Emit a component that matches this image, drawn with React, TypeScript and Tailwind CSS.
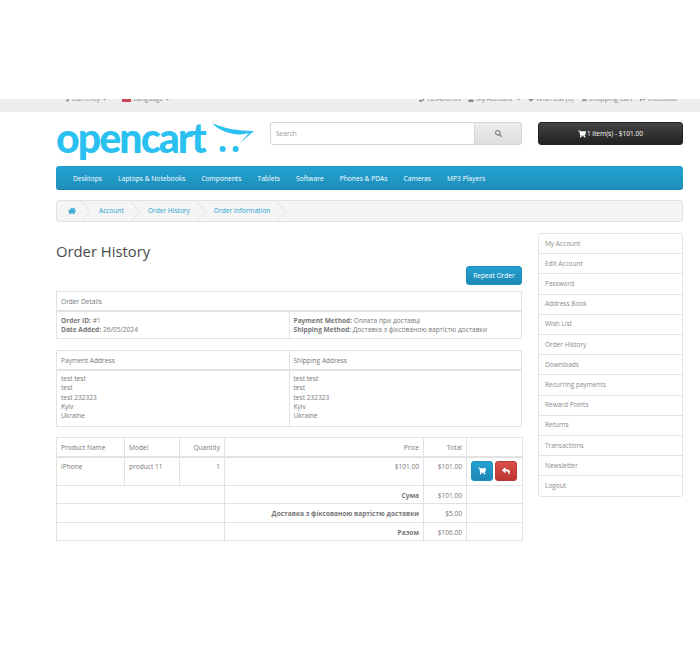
import { FaHome, FaSearch, FaShoppingCart, FaReply, FaPhone, FaUser, FaHeart, FaShare, FaDollarSign, FaCaretDown } from 'react-icons/fa'

const navItems = ['Desktops', 'Laptops & Notebooks', 'Components', 'Tablets', 'Software', 'Phones & PDAs', 'Cameras', 'MP3 Players']
const crumbs = ['Account', 'Order History', 'Order Information']
const sideItems = [
  'My Account', 'Edit Account', 'Password', 'Address Book', 'Wish List', 'Order History', 'Downloads',
  'Recurring payments', 'Reward Points', 'Returns', 'Transactions', 'Newsletter', 'Logout',
]
const address = ['test test', 'test', 'test 232323', 'Kyiv', 'Ukraine']

const cell = 'border border-[#e2e2e2] px-[4px] pt-[4px] align-top'
const head = 'border border-b-2 border-[#e2e2e2] px-[4px] pt-[2px]'

function Chevron() {
  return (
    <svg className="absolute right-0 top-0 h-[21px] w-[10px]" viewBox="0 0 10 21" fill="none">
      <path d="M0 0 L9.5 10.5 L0 21" stroke="#e2e2e2" strokeWidth="1" />
    </svg>
  )
}

function TopBar() {
  return (
    <div className="h-[13px] overflow-hidden bg-[#eee] text-[#888]">
      <div className="ml-[56px] mr-[17px] -mt-[6px] flex h-[13px] items-center justify-between pl-[9px] pr-[6px] text-[6.7px]">
        <div className="flex items-center gap-[15px]">
          <span className="flex items-center gap-[2px]"><FaDollarSign className="h-[6px] w-[5px]" /> Currency <FaCaretDown className="h-[6px] w-[5px]" /></span>
          <span className="flex items-center gap-[2px]">
            <span className="h-[5px] w-[9px] bg-[#c8485a]" /> Language <FaCaretDown className="h-[6px] w-[5px]" />
          </span>
        </div>
        <div className="flex items-center gap-[7px]">
          <span className="flex items-center gap-[2px]"><FaPhone className="h-[6px] w-[6px]" /> 123456789</span>
          <span className="flex items-center gap-[2px]"><FaUser className="h-[6px] w-[6px]" /> My Account <FaCaretDown className="ml-[2px] h-[6px] w-[5px]" /></span>
          <span className="flex items-center gap-[2px]"><FaHeart className="h-[6px] w-[6px]" /> Wish List (0)</span>
          <span className="flex items-center gap-[2px]"><FaShoppingCart className="h-[6px] w-[6px]" /> Shopping Cart</span>
          <span className="flex items-center gap-[2px]"><FaShare className="h-[6px] w-[6px]" /> Checkout</span>
        </div>
      </div>
    </div>
  )
}

function Logo() {
  return (
    <div className="relative h-[40px] w-[214px]">
      <span className="block font-['Lato',sans-serif] text-[41px] leading-[31px] font-black tracking-[-1.9px] text-[#2ac1f1]">opencart</span>
      <svg className="absolute left-[154px] top-0 h-[32px] w-[46px]" viewBox="0 0 46 32" fill="#2ac1f1">
        <path d="M2 1 C12 6 28 9 44 9 L30 21 L39 11 C26 15 10 10 2 1 Z" />
        <circle cx="12.7" cy="27" r="3" />
        <circle cx="25.7" cy="27" r="3" />
      </svg>
    </div>
  )
}

export default function App() {
  return (
    <div className="min-h-[650px] bg-white pt-[99px] font-['Open_Sans',sans-serif] text-[6.6px] text-[#777]">
      <TopBar />

      <div className="mx-[56px] w-[627px]">
        <div className="mt-[10px] flex items-start">
          <Logo />
          <div className="flex h-[23px] w-[252px]">
            <div className="flex flex-1 items-center rounded-l-[3px] border border-[#d5d5d5] bg-white px-[5px] pt-[1px] text-[#999]">Search</div>
            <div className="flex w-[47px] items-center justify-center rounded-r-[3px] border border-l-0 border-[#d5d5d5] bg-gradient-to-b from-[#eee] to-[#ddd]">
              <FaSearch className="h-[7px] w-[7px] text-[#777]" />
            </div>
          </div>
          <div className="ml-[16px] flex h-[23px] w-[145px] items-center justify-center gap-[1px] rounded-[3px] border border-[#222] bg-gradient-to-b from-[#444] to-[#222] pt-[1px] text-white">
            <FaShoppingCart className="h-[8px] w-[8px]" /> 1 item(s) - $101.00
          </div>
        </div>

        <nav className="mt-[4px] flex h-[24px] items-center gap-[16px] rounded-[3px] border-b border-[#1f7fad] bg-gradient-to-b from-[#23a1d1] to-[#1f90bb] pl-[17px] pt-[3px] text-[6.7px] text-white">
          {navItems.map((item) => (
            <span key={item}>{item}</span>
          ))}
        </nav>

        <ul className="mt-[10px] flex h-[22px] items-center rounded-[3px] border border-[#e2e2e2] bg-[#f5f5f5] text-[#23a1d1]">
          <li className="relative flex h-[21px] items-center pl-[11px] pr-[15px]">
            <FaHome className="h-[8px] w-[8px]" />
            <Chevron />
          </li>
          {crumbs.map((c) => (
            <li key={c} className="relative flex h-[21px] items-center pl-[8px] pr-[16px]">
              {c}
              <Chevron />
            </li>
          ))}
        </ul>

        <div className="mt-[11px] flex gap-[16px]">
          <div className="w-[466px]">
            <h1 className="mt-[10px] text-[14.8px] leading-[16px] text-[#4a4a4a]">Order History</h1>
            <div className="mt-[7px] flex justify-end">
              <button className="h-[19px] w-[56px] rounded-[3px] border border-[#1f90bb] bg-gradient-to-b from-[#23a1d1] to-[#1f88b5] text-white">
                Repeat Order
              </button>
            </div>

            <table className="mt-[6px] w-full table-fixed border-collapse">
              <thead>
                <tr className="h-[19px]">
                  <td colSpan={2} className={head}>Order Details</td>
                </tr>
              </thead>
              <tbody>
                <tr className="h-[28px] leading-[9px]">
                  <td className="border border-[#e2e2e2] px-[4px]">
                    <b>Order ID:</b> #1<br />
                    <b>Date Added:</b> 26/05/2024
                  </td>
                  <td className="border border-[#e2e2e2] px-[4px]">
                    <b>Payment Method:</b> Оплата при доставці<br />
                    <b>Shipping Method:</b> Доставка з фіксованою вартістю доставки
                  </td>
                </tr>
              </tbody>
            </table>

            <table className="mt-[11px] w-full table-fixed border-collapse">
              <thead>
                <tr className="h-[19px]">
                  <td className={head}>Payment Address</td>
                  <td className={head}>Shipping Address</td>
                </tr>
              </thead>
              <tbody>
                <tr className="h-[57px] leading-[9.4px]">
                  {[0, 1].map((i) => (
                    <td key={i} className="border border-[#e2e2e2] px-[4px] pb-[2px]">
                      {address.map((line) => (
                        <div key={line}>{line}</div>
                      ))}
                    </td>
                  ))}
                </tr>
              </tbody>
            </table>

            <table className="mt-[10px] w-full table-fixed border-collapse">
              <colgroup>
                <col className="w-[68px]" />
                <col className="w-[55px]" />
                <col className="w-[45px]" />
                <col className="w-[199px]" />
                <col className="w-[43px]" />
                <col className="w-[56px]" />
              </colgroup>
              <thead>
                <tr className="h-[19px]">
                  <td className={head}>Product Name</td>
                  <td className={head}>Model</td>
                  <td className={`${head} text-right`}>Quantity</td>
                  <td className={`${head} text-right`}>Price</td>
                  <td className={`${head} text-right`}>Total</td>
                  <td className={head} />
                </tr>
              </thead>
              <tbody>
                <tr className="h-[29px]">
                  <td className={cell}>iPhone</td>
                  <td className={cell}>product 11</td>
                  <td className={`${cell} text-right`}>1</td>
                  <td className={`${cell} text-right`}>$101.00</td>
                  <td className={`${cell} text-right`}>$101.00</td>
                  <td className="border border-[#e2e2e2] px-[4px] align-middle">
                    <div className="flex gap-[2px]">
                      <span className="flex h-[20px] w-[22px] items-center justify-center rounded-[3px] border border-[#1f90bb] bg-gradient-to-b from-[#23a1d1] to-[#1f88b5] text-white">
                        <FaShoppingCart className="h-[8px] w-[8px]" />
                      </span>
                      <span className="flex h-[20px] w-[22px] items-center justify-center rounded-[3px] border border-[#b53a36] bg-gradient-to-b from-[#da4f49] to-[#bd362f] text-white">
                        <FaReply className="h-[8px] w-[8px]" />
                      </span>
                    </div>
                  </td>
                </tr>
                {[
                  ['Сума', '$101.00', 'h-[18px]'],
                  ['Доставка з фіксованою вартістю доставки', '$5.00', 'h-[19px]'],
                  ['Разом', '$106.00', 'h-[18px]'],
                ].map(([label, value, h]) => (
                  <tr key={label} className={h}>
                    <td colSpan={3} className="border border-[#e2e2e2]" />
                    <td className="border border-[#e2e2e2] px-[4px] pt-[2px] text-right font-bold">{label}</td>
                    <td className="border border-[#e2e2e2] px-[4px] pt-[2px] text-right">{value}</td>
                    <td className="border border-[#e2e2e2]" />
                  </tr>
                ))}
              </tbody>
            </table>
          </div>

          <aside className="w-[145px] self-start rounded-[3px] border border-[#e2e2e2] text-[6.5px] text-[#8a8a8a]">
            {sideItems.map((item) => (
              <div key={item} className="flex h-[20.2px] items-center border-b border-[#e2e2e2] px-[6px] last:border-b-0">
                {item}
              </div>
            ))}
          </aside>
        </div>
      </div>
    </div>
  )
}
